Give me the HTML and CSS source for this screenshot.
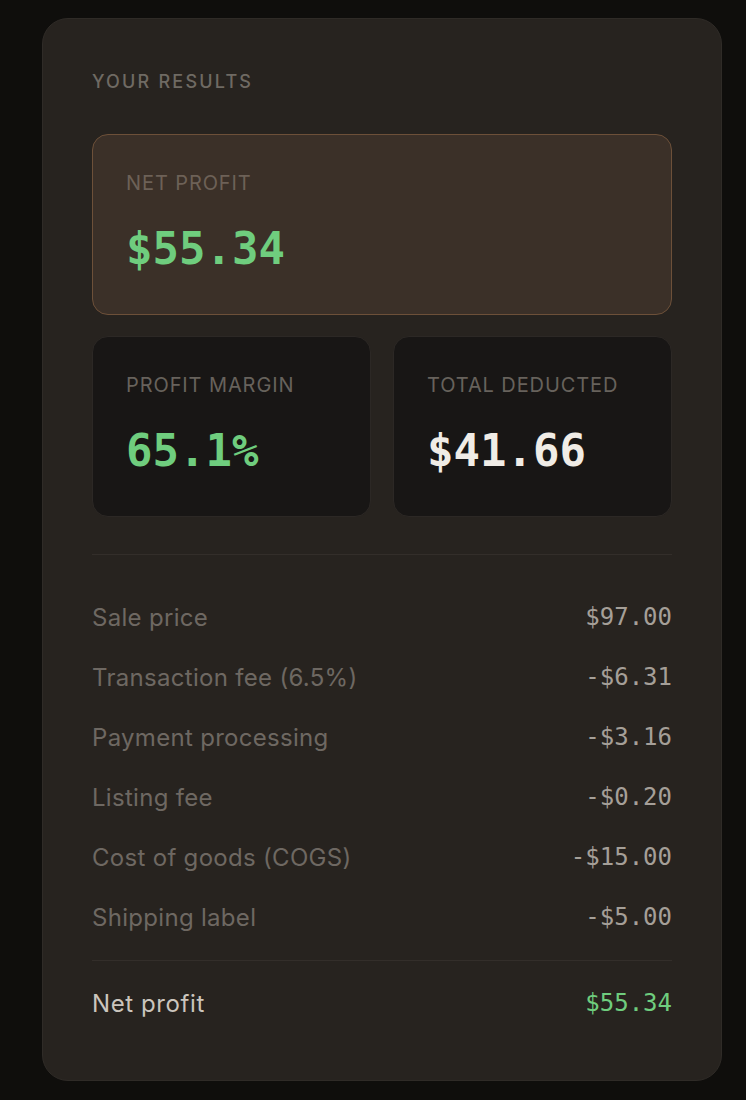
FILE: index.html
```html
<!DOCTYPE html>
<html>
<head>
<meta charset="utf-8">
<link rel="stylesheet" href="styles.css">
</head>
<body>
<div class="card">
  <div class="title">YOUR RESULTS</div>
  <div class="stat hero">
    <div class="stat-label">NET PROFIT</div>
    <div class="stat-value green">$55.34</div>
  </div>
  <div class="stat-grid">
    <div class="stat">
      <div class="stat-label">PROFIT MARGIN</div>
      <div class="stat-value green">65.1%</div>
    </div>
    <div class="stat">
      <div class="stat-label">TOTAL DEDUCTED</div>
      <div class="stat-value white">$41.66</div>
    </div>
  </div>
  <div class="rows">
    <div class="row"><span class="row-label">Sale price</span><span class="row-value">$97.00</span></div>
    <div class="row"><span class="row-label">Transaction fee (6.5%)</span><span class="row-value">-$6.31</span></div>
    <div class="row"><span class="row-label">Payment processing</span><span class="row-value">-$3.16</span></div>
    <div class="row"><span class="row-label">Listing fee</span><span class="row-value">-$0.20</span></div>
    <div class="row"><span class="row-label">Cost of goods (COGS)</span><span class="row-value">-$15.00</span></div>
    <div class="row"><span class="row-label">Shipping label</span><span class="row-value">-$5.00</span></div>
  </div>
  <div class="row total"><span class="row-label">Net profit</span><span class="row-value green">$55.34</span></div>
</div>
</body>
</html>
```
FILE: styles.css
```css
html, body {
  margin: 0;
  padding: 0;
  background: #0f0e0c;
}
body {
  padding: 18px 24px 20px 42px;
  font-family: "Inter", "Lato", sans-serif;
}
.card {
  background: #27231f;
  border: 1px solid #2f2b27;
  border-radius: 26px;
  padding: 50px 49px 47px 49px;
}
.title {
  font-size: 18px;
  line-height: 26px;
  letter-spacing: 2.2px;
  font-weight: 500;
  color: #6f6a63;
  margin-bottom: 39px;
}
.stat {
  background: #181615;
  border: 1px solid #2c2825;
  border-radius: 16px;
  padding: 35px 33px 38px 33px;
}
.stat.hero {
  background: #3b3028;
  border-color: #6d5039;
  margin-bottom: 21px;
}
.stat-label {
  font-size: 20px;
  line-height: 26px;
  letter-spacing: 0.9px;
  color: #67625c;
}
.hero .stat-label {
  color: #6d6157;
}
.stat-value {
  margin-top: 26px;
  font-family: "DejaVu Sans Mono", "Liberation Mono", monospace;
  font-weight: 700;
  font-size: 44px;
  line-height: 54px;
}
.green { color: #6fcd7e; }
.white { color: #f0ece6; }
.stat-grid {
  display: grid;
  grid-template-columns: 1fr 1fr;
  gap: 22px;
}
.rows {
  margin-top: 37px;
  border-top: 1px solid #332e2a;
  padding-top: 32px;
  padding-bottom: 13px;
  border-bottom: 1px solid #332e2a;
}
.row {
  display: flex;
  justify-content: space-between;
  align-items: center;
  height: 60px;
}
.row-label {
  font-size: 24px;
  letter-spacing: 0.3px;
  color: #6e6862;
}
.row-value {
  font-family: "DejaVu Sans Mono", "Liberation Mono", monospace;
  font-size: 24px;
  color: #a59f98;
}
.total {
  margin-top: 12px;
}
.total .row-label {
  color: #cbc5bd;
  letter-spacing: 0.6px;
}
.total .row-value {
  color: #6fcd7e;
}
```
